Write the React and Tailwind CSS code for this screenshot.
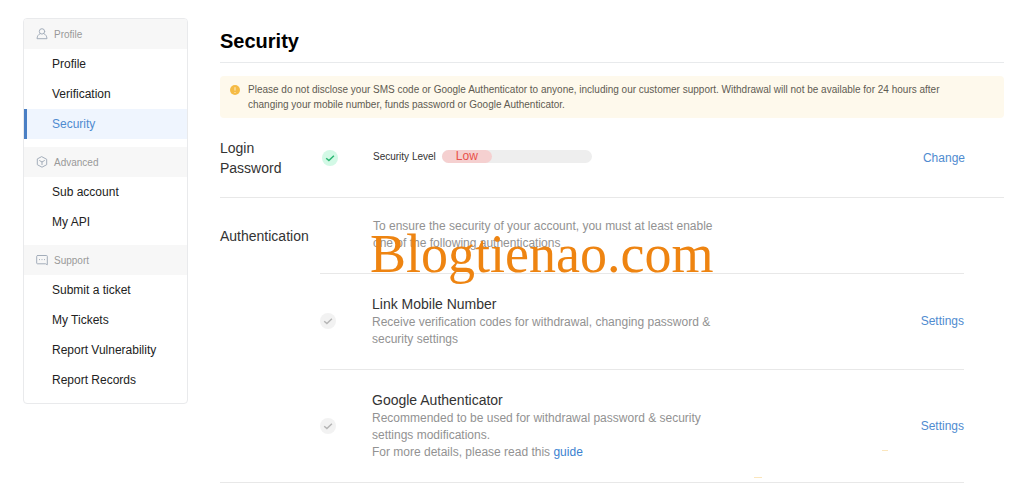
import React from "react";

const menu = [
  {
    title: "Profile",
    icon: "user",
    items: ["Profile", "Verification", "Security"],
  },
  {
    title: "Advanced",
    icon: "cube",
    items: ["Sub account", "My API"],
  },
  {
    title: "Support",
    icon: "chat",
    items: ["Submit a ticket", "My Tickets", "Report Vulnerability", "Report Records"],
  },
];

function MenuIcon({ name }) {
  return (
    <svg
      viewBox="0 0 12 12"
      className="size-3 shrink-0"
      fill="none"
      stroke="#a3adba"
      strokeLinecap="round"
      strokeLinejoin="round"
    >
      {name === "user" && (
        <>
          <circle cx="6" cy="3.4" r="2.7" />
          <path d="M4.2 5.6C2.4 6.4 1.2 8 1 10.7h10C10.8 8 9.6 6.4 7.8 5.6" />
        </>
      )}
      {name === "cube" && (
        <>
          <path d="M6 .8 10.7 3.3v5.4L6 11.2 1.3 8.7V3.3z" />
          <path d="M3.6 4.6 6 6l2.4-1.400M6 6v2.600" />
        </>
      )}
      {name === "chat" && (
        <>
          <path d="M1.500 1.500h9a.8.8 0 0 1 .8.8v8.500L9.600 9.800H1.500a.8.8 0 0 1-.8-.8V2.300a.8.8 0 0 1 .8-.8z" />
          <path d="M3.400 5.600h.2M5.900 5.600h.2M8.400 5.600h.2" />
        </>
      )}
    </svg>
  );
}

function Sidebar() {
  return (
    <nav className="w-[165px] shrink-0 rounded border border-[#e9eaec] overflow-hidden">
      {menu.map((group) => (
        <div key={group.title} className="pb-2">
          <h2 className="flex h-[30px] items-center gap-1.5 bg-[#f7f7f7] pl-3 text-[10px] text-[#999]">
            <MenuIcon name={group.icon} />
            {group.title}
          </h2>
          <ul>
            {group.items.map((item) => (
              <li key={item}>
                <a
                  href="#"
                  className={
                    item === "Security"
                      ? "flex h-[30px] items-center border-l-3 border-[#4a7fc4] bg-[#eff5fe] pl-[25px] text-[#4f8bd0]"
                      : "flex h-[30px] items-center pl-7 text-[#222]"
                  }
                >
                  {item}
                </a>
              </li>
            ))}
          </ul>
        </div>
      ))}
    </nav>
  );
}

function Check({ active }) {
  return (
    <svg viewBox="0 0 16 16" className="size-4 shrink-0" fill="none">
      <circle cx="8" cy="8" r="8" fill={active ? "#d3f9e6" : "#f2f2f2"} />
      <path
        d="M4.200 8.200 6.900 10.600 11.900 5.800"
        stroke={active ? "#2bb673" : "#b5b5b5"}
        strokeWidth="1.5"
      />
    </svg>
  );
}

function AuthMethod({ title, children }) {
  return (
    <div className="flex items-center border-t border-[#e8e8e8] pt-5 pb-[21px]">
      <Check />
      <div className="ml-9 w-[340px]">
        <h3 className="text-[14px] leading-5 text-[#333]">{title}</h3>
        <p className="leading-[17px] text-[#929292]">{children}</p>
      </div>
      <button type="button" className="ml-auto text-[#4f8bd0] cursor-pointer">
        Settings
      </button>
    </div>
  );
}

function App() {
  return (
    <div className="relative flex items-start gap-8 bg-white pt-[18px] pr-5 pl-[23px] font-['Liberation_Sans',Arial,sans-serif] text-[12px]">
      <Sidebar />

      <main className="min-w-0 flex-1">
        <h1 className="border-b border-[#e8eaec] pt-2 pb-1.5 text-[20px] leading-[30px] font-bold text-black">
          Security
        </h1>

        {/* Warning */}
        <div className="mt-[13px] flex gap-2 rounded bg-[#fef9ec] px-2.5 py-1.5 text-[10px] leading-[15px] text-[#5f5b52]">
          <svg viewBox="0 0 10 10" className="mt-[3px] size-2.5 shrink-0">
            <circle cx="5" cy="5" r="5" fill="#f5bb45" />
            <path d="M5 2.200v3.400M5 7v1" stroke="#fdeec8" strokeWidth="1" />
          </svg>
          <p className="max-w-[720px]">
            Please do not disclose your SMS code or Google Authenticator to anyone, including our customer
            support. Withdrawal will not be available for 24 hours after changing your mobile number, funds
            password or Google Authenticator.
          </p>
        </div>

        {/* Login password */}
        <section className="flex items-center border-b border-[#e8e8e8] pt-5 pr-[39px] pb-[19px]">
          <h2 className="w-[102px] pr-8 text-[14px] leading-5 text-[#333]">Login Password</h2>
          <Check active />
          <div className="ml-[35px] flex items-center gap-1.5 pb-1">
            <span className="text-[10px] text-[#333]">Security Level</span>
            <div className="h-[13px] w-[150px] rounded-full bg-[#eee]">
              <div className="h-full w-1/3 rounded-full bg-[#f5d0d0] text-center leading-[13px] text-[#e8504a]">
                Low
              </div>
            </div>
          </div>
          <button type="button" className="ml-auto text-[#4f8bd0] cursor-pointer">
            Change
          </button>
        </section>

        {/* Authentication */}
        <section className="mr-10 flex border-b border-[#e8e8e8]">
          <h2 className="w-[100px] shrink-0 pt-7 text-[14px] leading-5 text-[#333]">Authentication</h2>
          <div className="flex-1">
            <p className="ml-[53px] w-[340px] pt-5 pb-[21px] leading-[17px] text-[#929292]">
              To ensure the security of your account, you must at least enable one of the following
              authentications
            </p>
            <AuthMethod title="Link Mobile Number">
              Receive verification codes for withdrawal, changing password &amp; security settings
            </AuthMethod>
            <AuthMethod title="Google Authenticator">
              Recommended to be used for withdrawal password &amp; security settings modifications.
              <br />
              For more details, please read this{" "}
              <a href="#" className="text-[#3b82d0]">
                guide
              </a>
            </AuthMethod>
          </div>
        </section>
      </main>

      {/* Watermark */}
      <div className="pointer-events-none absolute top-[224px] left-[370px] font-['Liberation_Serif','Times_New_Roman',serif] text-[54px] leading-[60px] text-[#ee8411]">
        Blogtienao.com
      </div>
      <span className="absolute top-[477px] left-[754px] h-px w-2 bg-[#fbe6bd]" />
      <span className="absolute top-[450px] left-[882px] h-px w-1.5 bg-[#fbe6bd]" />
    </div>
  );
}

export default App;
